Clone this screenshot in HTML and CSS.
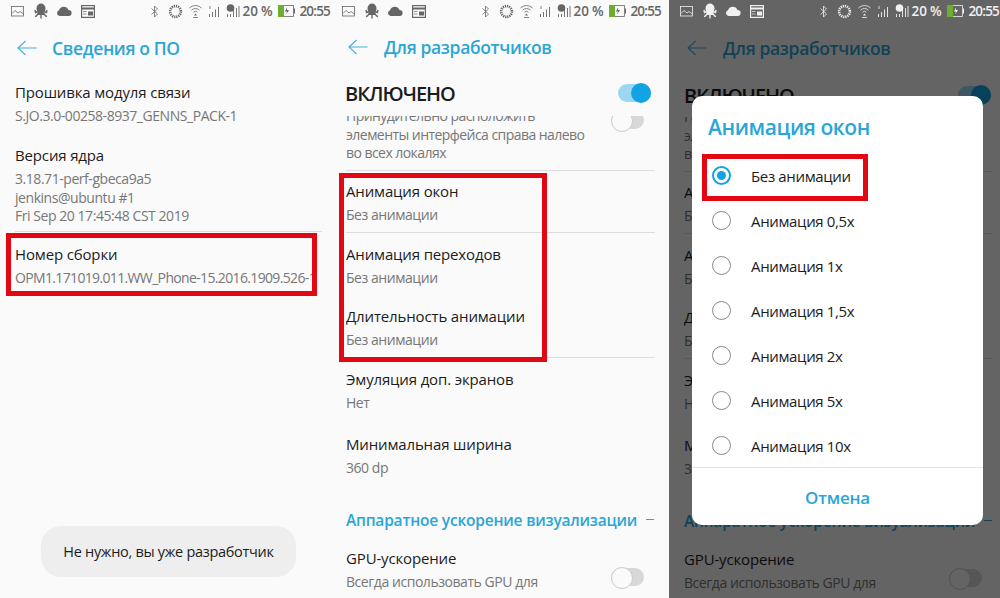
FILE: index.html
```html
<!DOCTYPE html>
<html lang="ru">
<head>
  <meta charset="UTF-8">
  <meta name="viewport" content="width=device-width, initial-scale=1.0">
  <title>Анимация окон</title>
  <link rel="stylesheet" href="styles.css">
</head>
<body>
  <svg class="defs" width="0" height="0">
    <symbol id="i-picture" viewBox="0 0 13 11"><rect x="0.5" y="0.5" width="12" height="9.5" fill="none" stroke="currentColor" stroke-width="0.8"/><path d="M1 7.500l3-3 3 2.500 2-1.500 3.500 2.500" fill="none" stroke="currentColor" stroke-width="0.8"/></symbol>
    <symbol id="i-octopus" viewBox="0 0 14 16"><ellipse cx="7" cy="5.500" rx="4.500" ry="5" fill="currentColor"/><rect x="4" y="8" width="6" height="4" fill="currentColor"/><path d="M4 8.500L1.500 9.500 1 7M4.500 10l-2 3-1.500 .5M7 10v5.500M9.500 10l2 3 1.500 .5M10 8.500l2.500 1L13 7" fill="none" stroke="currentColor" stroke-width="1.400"/></symbol>
    <symbol id="i-cloud" viewBox="0 0 16 10"><path d="M3.500 10A3 3 0 0 1 3 4.200 5 5 0 0 1 12.400 4 3 3 0 0 1 12.800 10z" fill="currentColor"/></symbol>
    <symbol id="i-window" viewBox="0 0 14 13"><rect x="0.600" y="0.600" width="12.800" height="11.800" fill="none" stroke="currentColor" stroke-width="1.200"/><path d="M1 3.500h12" stroke="currentColor" stroke-width="2"/><rect x="7" y="6.500" width="5" height="4" fill="currentColor"/><path d="M2 6.500h3.500M2 9h3.500" stroke="currentColor" stroke-width="0.700"/></symbol>
    <symbol id="i-bt" viewBox="0 0 8 13"><path d="M0.500 3.500L6.500 9 3.500 12V1l3 3L0.500 9.500" fill="none" stroke="currentColor" stroke-width="0.800"/></symbol>
    <symbol id="i-ring" viewBox="0 0 15 15"><circle cx="7.500" cy="7.500" r="5.400" fill="none" stroke="currentColor" stroke-width="2.600" stroke-dasharray="1.200 0.900"/></symbol>
    <symbol id="i-wifi" viewBox="0 0 13 14"><path d="M0.500 4a8.500 8.500 0 0 1 12 0M2.500 6.200a5.500 5.500 0 0 1 8 0M4.500 8.200a2.800 2.800 0 0 1 4 0" fill="none" stroke="currentColor" stroke-width="0.800"/><path d="M6.500 9.500l1.500 2h-3z" fill="currentColor"/><path d="M4 13.500h5" stroke="currentColor" stroke-width="0.800"/></symbol>
    <symbol id="i-signal" viewBox="0 0 13 14"><path d="M1.500 13v-3M4.500 13V8M7.500 13V5.500M10.500 13V3" stroke="currentColor" stroke-width="0.900"/><path d="M2 2v3" stroke="currentColor" stroke-width="0.800"/></symbol>
    <symbol id="i-signal2" viewBox="0 0 14 14"><circle cx="4.500" cy="4" r="3.800" fill="currentColor"/><path d="M1.500 13v-3M4.500 13V10M7.500 13V6M10.500 13V4M13 13V2" stroke="currentColor" stroke-width="0.900"/></symbol>
    <symbol id="i-battery" viewBox="0 0 17 12"><rect x="0.500" y="0.500" width="15" height="11" fill="none" stroke="currentColor" stroke-width="0.800"/><rect x="0" y="0" width="6" height="12" fill="#6fae2d"/><rect x="16" y="3.500" width="1" height="5" fill="currentColor"/><path d="M9 2.500L7 6.500h2l-1 3 3-4.500H9z" fill="currentColor"/></symbol>
  </svg>

  <div class="phones">
    <section class="phone phone-first">
      <div class="statusbar">
        <svg class="ic ic-picture"><use href="#i-picture"/></svg>
        <svg class="ic ic-octopus"><use href="#i-octopus"/></svg>
        <svg class="ic ic-cloud"><use href="#i-cloud"/></svg>
        <svg class="ic ic-window"><use href="#i-window"/></svg>
        <span class="status-right">
          <svg class="ic ic-bt"><use href="#i-bt"/></svg>
          <svg class="ic ic-ring"><use href="#i-ring"/></svg>
          <svg class="ic ic-wifi"><use href="#i-wifi"/></svg>
          <svg class="ic ic-signal"><use href="#i-signal"/></svg>
          <svg class="ic ic-signal2"><use href="#i-signal2"/></svg>
          <span class="level">20 %</span>
          <svg class="ic ic-battery"><use href="#i-battery"/></svg>
          <span class="clock">20:55</span>
        </span>
      </div>
      <header class="appbar">
        <svg class="back" viewBox="0 0 20 16"><path d="M19.500 8H1M8.500 1L1 8l7.500 7" fill="none" stroke="currentColor" stroke-width="1.100"/></svg>
        <h1>Сведения о ПО</h1>
      </header>
      <div class="about">
        <div class="item">
          <div class="item-title">Прошивка модуля связи</div>
          <div class="item-sub">S.JO.3.0-00258-8937_GENNS_PACK-1</div>
        </div>
        <div class="item item-long line">
          <div class="item-title">Версия ядра</div>
          <div class="item-sub">3.18.71-perf-gbeca9a5<br>jenkins@ubuntu #1<br>Fri Sep 20 17:45:48 CST 2019</div>
        </div>
        <div class="item item-build">
          <div class="item-title">Номер сборки</div>
          <div class="item-sub">OPM1.171019.011.WW_Phone-15.2016.1909.526-1</div>
        </div>
      </div>
      <div class="toast">Не нужно, вы уже разработчик</div>
      <div class="mark mark-build"></div>
    </section>

    <section class="phone phone-second">
      <div class="statusbar">
        <svg class="ic ic-picture"><use href="#i-picture"/></svg>
        <svg class="ic ic-octopus"><use href="#i-octopus"/></svg>
        <svg class="ic ic-cloud"><use href="#i-cloud"/></svg>
        <svg class="ic ic-window"><use href="#i-window"/></svg>
        <span class="status-right">
          <svg class="ic ic-bt"><use href="#i-bt"/></svg>
          <svg class="ic ic-ring"><use href="#i-ring"/></svg>
          <svg class="ic ic-wifi"><use href="#i-wifi"/></svg>
          <svg class="ic ic-signal"><use href="#i-signal"/></svg>
          <svg class="ic ic-signal2"><use href="#i-signal2"/></svg>
          <span class="level">20 %</span>
          <svg class="ic ic-battery"><use href="#i-battery"/></svg>
          <span class="clock">20:55</span>
        </span>
      </div>
      <header class="appbar">
        <svg class="back" viewBox="0 0 20 16"><path d="M19.500 8H1M8.500 1L1 8l7.500 7" fill="none" stroke="currentColor" stroke-width="1.100"/></svg>
        <h1>Для разработчиков</h1>
      </header>
      <div class="master">
        <span>ВКЛЮЧЕНО</span>
        <span class="toggle on"></span>
      </div>
      <div class="settings">
        <div class="item-clipped line">
          <div class="item-sub">Принудительно расположить<br>элементы интерфейса справа налево<br>во всех локалях</div>
          <span class="toggle"></span>
        </div>
        <div class="item item-first"><div class="item-title">Анимация окон</div><div class="item-sub">Без анимации</div></div>
        <div class="item-rule"></div>
        <div class="item"><div class="item-title">Анимация переходов</div><div class="item-sub">Без анимации</div></div>
        <div class="item"><div class="item-title">Длительность анимации</div><div class="item-sub">Без анимации</div></div>
        <div class="item-rule"></div>
        <div class="item"><div class="item-title">Эмуляция доп. экранов</div><div class="item-sub">Нет</div></div>
        <div class="item item-wide"><div class="item-title">Минимальная ширина</div><div class="item-sub">360 dp</div></div>
        <div class="section-title"><span>Аппаратное ускорение визуализации</span><i></i></div>
        <div class="item item-switch">
          <div><div class="item-title">GPU-ускорение</div><div class="item-sub">Всегда использовать GPU для</div></div>
          <span class="toggle"></span>
        </div>
      </div>
      <div class="mark mark-anim"></div>
    </section>

    <section class="phone phone-third">
      <div class="statusbar">
        <svg class="ic ic-picture"><use href="#i-picture"/></svg>
        <svg class="ic ic-octopus"><use href="#i-octopus"/></svg>
        <svg class="ic ic-cloud"><use href="#i-cloud"/></svg>
        <svg class="ic ic-window"><use href="#i-window"/></svg>
        <span class="status-right">
          <svg class="ic ic-bt"><use href="#i-bt"/></svg>
          <svg class="ic ic-ring"><use href="#i-ring"/></svg>
          <svg class="ic ic-wifi"><use href="#i-wifi"/></svg>
          <svg class="ic ic-signal"><use href="#i-signal"/></svg>
          <svg class="ic ic-signal2"><use href="#i-signal2"/></svg>
          <span class="level">20 %</span>
          <svg class="ic ic-battery"><use href="#i-battery"/></svg>
          <span class="clock">20:55</span>
        </span>
      </div>
      <header class="appbar">
        <svg class="back" viewBox="0 0 20 16"><path d="M19.500 8H1M8.500 1L1 8l7.500 7" fill="none" stroke="currentColor" stroke-width="1.100"/></svg>
        <h1>Для разработчиков</h1>
      </header>
      <div class="master">
        <span>ВКЛЮЧЕНО</span>
        <span class="toggle on"></span>
      </div>
      <div class="settings">
        <div class="item-clipped line">
          <div class="item-sub">Принудительно расположить<br>элементы интерфейса справа налево<br>во всех локалях</div>
          <span class="toggle"></span>
        </div>
        <div class="item item-first"><div class="item-title">Анимация окон</div><div class="item-sub">Без анимации</div></div>
        <div class="item-rule"></div>
        <div class="item"><div class="item-title">Анимация переходов</div><div class="item-sub">Без анимации</div></div>
        <div class="item"><div class="item-title">Длительность анимации</div><div class="item-sub">Без анимации</div></div>
        <div class="item-rule"></div>
        <div class="item"><div class="item-title">Эмуляция доп. экранов</div><div class="item-sub">Нет</div></div>
        <div class="item item-wide"><div class="item-title">Минимальная ширина</div><div class="item-sub">360 dp</div></div>
        <div class="section-title"><span>Аппаратное ускорение визуализации</span><i></i></div>
        <div class="item item-switch">
          <div><div class="item-title">GPU-ускорение</div><div class="item-sub">Всегда использовать GPU для</div></div>
          <span class="toggle"></span>
        </div>
      </div>
      <div class="scrim"></div>
      <div class="dialog">
        <h2>Анимация окон</h2>
        <ul class="options">
          <li class="picked"><span class="radio"></span>Без анимации</li>
          <li><span class="radio"></span>Анимация 0,5x</li>
          <li><span class="radio"></span>Анимация 1x</li>
          <li><span class="radio"></span>Анимация 1,5x</li>
          <li><span class="radio"></span>Анимация 2x</li>
          <li><span class="radio"></span>Анимация 5x</li>
          <li><span class="radio"></span>Анимация 10x</li>
        </ul>
        <div class="cancel">Отмена</div>
      </div>
      <div class="mark mark-option"></div>
    </section>
  </div>
</body>
</html>
```

FILE: styles.css
```css
* { box-sizing: border-box; }
html, body { margin: 0; padding: 0; background: #fafafa; }
body { font-family: "Open Sans", "Noto Sans", sans-serif; color: #1c1c1c; overflow: hidden; }
.defs { position: absolute; }

.phones { display: flex; width: 1000px; height: 598px; overflow: hidden; }
.phone { position: relative; height: 598px; overflow: hidden; background: #fafafa; flex: none; padding-left: 15px; }
.phone-first { width: 331px; }
.phone-second { width: 338px; }
.phone-third { width: 331px; }

.statusbar { display: flex; align-items: center; height: 22px; width: 319px; margin-left: -4px; color: #666; position: relative; z-index: 3; }
.phone-third .statusbar { color: #f0f0f0; }
.status-right { display: flex; align-items: center; margin-left: auto; font-size: 13.500px; font-weight: 600; letter-spacing: -0.8px; }
.ic { display: block; flex: none; }
.ic-picture { width: 13px; height: 11px; margin-right: 10px; }
.ic-octopus { width: 14px; height: 16px; margin-right: 8px; }
.ic-cloud { width: 16px; height: 10px; margin-right: 9px; }
.ic-window { width: 14px; height: 13px; }
.ic-bt { width: 8px; height: 13px; margin-right: 9px; }
.ic-ring { width: 15px; height: 15px; margin-right: 6px; }
.ic-wifi { width: 13px; height: 14px; margin-right: 6px; }
.ic-signal { width: 13px; height: 14px; margin-right: 5px; }
.ic-signal2 { width: 14px; height: 14px; margin-right: 3px; }
.level { margin-right: 6px; letter-spacing: -0.2px; }
.ic-battery { width: 17px; height: 12px; margin-right: 4px; }

.appbar { display: flex; align-items: center; height: 52px; color: #2aa6d6; }
.back { width: 20px; height: 16px; flex: none; margin-left: 2px; color: #43b1da; }
.appbar h1 { margin: 0 0 0 15px; font-size: 17.500px; font-weight: 600; letter-spacing: -0.35px; line-height: 24px; }
.phone-second .appbar { height: 50px; }
.phone-second h1, .phone-third h1 { margin-left: 16px; }
.phone-third .back { margin-left: 3px; }

.item-title { font-size: 15px; line-height: 24px; font-weight: 500; letter-spacing: -0.15px; color: #1c1c1c; white-space: nowrap; }
.item-sub { font-size: 14px; line-height: 24px; letter-spacing: -0.45px; color: #777; white-space: nowrap; }

.about { width: 307px; padding-top: 6px; }
.about .item { padding: 0 0 15px; }
.about .item-long { padding-bottom: 5px; }
.about .item-build { padding-top: 10px; }
.item-long .item-sub { line-height: 18.500px; margin-top: 3px; }
.line { border-bottom: 1px solid #ddd; }
.item-build .item-sub { width: 297px; overflow: hidden; letter-spacing: -0.65px; }

.toast { position: absolute; left: 41px; top: 526px; width: 255px; height: 51px; display: flex; align-items: center; justify-content: center; background: #eee; border-radius: 20px; font-size: 14.500px; letter-spacing: -0.3px; }

.master { display: flex; align-items: center; justify-content: space-between; width: 306px; height: 44px; margin-top: -2px; margin-left: -1px; font-size: 20px; font-weight: 600; letter-spacing: -1px; color: #1c1c1c; }
.phone-second .master { height: 46px; }
.phone-third .master { margin-top: -1px; width: 307px; margin-left: 0; }

.settings { width: 309px; height: 483px; overflow: hidden; }
.item-clipped { position: relative; height: 64px; margin-top: -9px; }
.item-clipped .item-sub { line-height: 18.500px; letter-spacing: -0.55px; }
.item-clipped .toggle { position: absolute; right: 0; top: 4px; margin-right: 11px; }
.settings .item { height: 62px; padding-top: 9px; }
.settings .item-first { height: 61px; padding-top: 8px; }
.settings .item-wide { height: 81px; padding-top: 12px; }
.item-rule { height: 1px; background: #ddd; }
.section-title { display: flex; align-items: center; justify-content: space-between; height: 38px; padding-right: 1px; font-size: 15.500px; font-weight: 600; letter-spacing: -0.2px; color: #2aa6d6; }
.section-title i { width: 8px; height: 1px; background: #2aa6d6; margin-top: -2px; }
.settings .item-switch { display: flex; justify-content: space-between; align-items: flex-end; height: 55px; padding-top: 7px; }

.toggle { position: relative; display: block; width: 33px; height: 18px; background: #d8d8d8; border-radius: 9px; flex: none; margin-right: 11px; }
.toggle::after { content: ""; position: absolute; left: 0; top: -1px; width: 20px; height: 20px; background: #fafafa; border: 1px solid #ccc; border-radius: 50%; }
.toggle.on { background: #9bd6f2; margin-right: 0; }
.toggle.on::after { left: auto; right: 0; background: #12a3e4; border: none; }
.item-switch .toggle { margin-bottom: 8px; }

.scrim { position: absolute; left: 0; top: 0; width: 100%; height: 100%; background: rgba(0, 0, 0, 0.6); z-index: 1; }
.dialog { position: absolute; left: 23px; top: 96px; width: 291px; height: 429px; background: #fff; border-radius: 10px; z-index: 2; }
.dialog h2 { margin: 0; padding: 16px 0 0 16px; font-size: 21px; line-height: 30px; font-weight: 600; letter-spacing: -0.4px; color: #2aa6d6; }
.options { list-style: none; margin: 0; padding: 11px 0 0; border-bottom: 1px solid #e3e3e3; height: 326px; }
.options li { display: flex; align-items: center; height: 45px; padding-left: 20px; font-size: 15px; font-weight: 500; letter-spacing: -0.35px; color: #1c1c1c; }
.radio { display: block; position: relative; width: 19px; height: 19px; margin-right: 20px; border: 1px solid #888; border-radius: 50%; flex: none; }
.picked .radio { border: 2px solid #12a3e4; }
.picked .radio::after { content: ""; position: absolute; left: 3px; top: 3px; width: 9px; height: 9px; background: #12a3e4; border-radius: 50%; }
.cancel { height: 60px; line-height: 60px; text-align: center; font-size: 17px; font-weight: 600; letter-spacing: -0.2px; color: #2aa6d6; }

.mark { position: absolute; border: 5px solid #e30613; z-index: 4; pointer-events: none; }
.mark-build { left: 6px; top: 233px; width: 311px; height: 63px; }
.mark-anim { left: 8px; top: 173px; width: 208px; height: 189px; }
.mark-option { left: 33px; top: 154px; width: 166px; height: 47px; }
```
